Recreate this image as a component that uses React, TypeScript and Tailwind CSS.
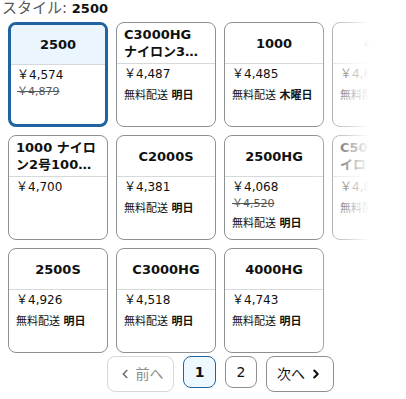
import { ChevronLeft, ChevronRight } from "lucide-react";

type Tile = {
  title: string;
  price: string;
  was?: string;
  ship?: string;
  selected?: boolean;
};

const tiles: Tile[] = [
  { title: "2500", price: "￥4,574", was: "￥4,879", selected: true },
  { title: "C3000HG ナイロン3号150m糸付", price: "￥4,487", ship: "明日" },
  { title: "1000", price: "￥4,485", ship: "木曜日" },
  { title: "4000", price: "￥4,890", ship: "明日" },
  { title: "1000 ナイロン2号100m糸付", price: "￥4,700" },
  { title: "C2000S", price: "￥4,381", ship: "明日" },
  { title: "2500HG", price: "￥4,068", was: "￥4,520", ship: "明日" },
  { title: "C5000XG ナイロン4号150m糸付", price: "￥4,860", ship: "明日" },
  { title: "2500S", price: "￥4,926", ship: "明日" },
  { title: "C3000HG", price: "￥4,518", ship: "明日" },
  { title: "4000HG", price: "￥4,743", ship: "明日" },
];

function TileCard({ tile }: { tile: Tile }) {
  const sel = tile.selected;
  return (
    <div
      className={`h-[105px] w-[100px] overflow-hidden rounded-[8px] bg-white ${
        sel ? "border-[3px] border-[#2162a1]" : "border border-[#8d9090]"
      }`}
    >
      <div
        className={`flex items-center justify-center border-b border-[#d5d9d9] px-[7px] ${
          sel ? "h-[40px] bg-[#eaf5fd]" : "h-[41px]"
        }`}
      >
        <div className="line-clamp-2 text-left text-[13px] font-bold leading-[17px] text-[#0f1111]">
          {tile.title}
        </div>
      </div>
      <div className={`pt-[2px] ${sel ? "px-[6px]" : "px-[7px]"}`}>
        <div className="text-[12px] leading-[17px] text-[#0f1111]">{tile.price}</div>
        {tile.was && (
          <div className="text-[11px] leading-[15px] text-[#565959] line-through">
            {tile.was}
          </div>
        )}
        {tile.ship && (
          <div className="mt-[5px] text-[11px] leading-[15px] text-[#0f1111]">
            無料配送 <span className="font-bold">{tile.ship}</span>
          </div>
        )}
      </div>
    </div>
  );
}

export default function App() {
  return (
    <div
      className="relative h-[399px] w-[406px] overflow-hidden bg-white text-[#0f1111]"
      style={{ fontFamily: '"DejaVu Sans", "Noto Sans CJK JP", sans-serif' }}
    >
      <div className="h-[22px] pl-[2px] text-[15px] leading-[16px]">
        <span className="text-[#565959]">スタイル: </span>
        <span className="text-[13px] font-bold">2500</span>
      </div>

      <div className="grid w-[432px] grid-cols-[repeat(4,100px)] gap-[8px] pl-[8px]">
        {tiles.map((t) => (
          <TileCard key={t.title} tile={t} />
        ))}
      </div>

      <div className="pointer-events-none absolute left-[314px] top-[20px] h-[335px] w-[92px] bg-gradient-to-r from-white/0 via-white via-60% to-white" />

      <div className="mt-[3px] flex items-start gap-[9px] pl-[107px]">
        <button className="flex h-[36px] w-[67px] items-center justify-center gap-[4px] rounded-[8px] border border-[#d5d9d9] text-[14px] text-[#8a8d8d]">
          <ChevronLeft size={14} strokeWidth={3} className="text-[#6f7373]" />
          前へ
        </button>
        <button className="flex h-[32px] w-[33px] items-center justify-center rounded-[8px] border border-[#2162a1] bg-[#edf8ff] text-[14px] font-bold">
          1
        </button>
        <button className="flex h-[32px] w-[32px] items-center justify-center rounded-[8px] border border-[#8d9090] text-[14px]">
          2
        </button>
        <button className="flex h-[36px] w-[68px] items-center justify-center gap-[4px] rounded-[8px] border border-[#8d9090] text-[14px]">
          次へ
          <ChevronRight size={14} strokeWidth={3.5} />
        </button>
      </div>
    </div>
  );
}
